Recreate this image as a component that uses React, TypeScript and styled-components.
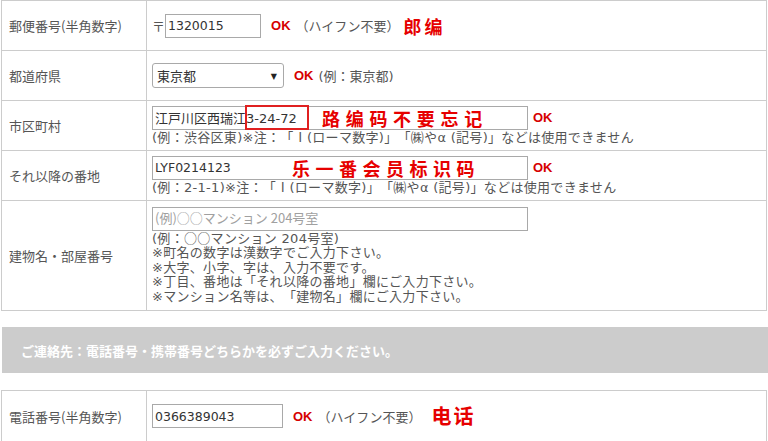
import React from 'react';
import styled, { createGlobalStyle } from 'styled-components';

const GlobalStyle = createGlobalStyle`
  html, body { margin: 0; padding: 0; background: #ffffff; }
  body {
    font-family: "DejaVu Sans", "Noto Sans CJK JP", sans-serif;
    font-size: 13px;
    color: #555555;
    text-spacing-trim: space-all;
  }
`;

const Page = styled.div`
  width: 768px;
  padding-left: 1px;
  box-sizing: border-box;
`;

const Table = styled.div<{ $mt?: number }>`
  width: 766px;
  border: 1px solid #cccccc;
  border-bottom: none;
  box-sizing: border-box;
  margin-top: ${(p) => p.$mt ?? 0}px;
`;

const Row = styled.div<{ $h: number }>`
  display: grid;
  grid-template-columns: 145px 1fr;
  height: ${(p) => p.$h}px;
  border-bottom: 1px solid #cccccc;
  box-sizing: border-box;
`;

const Label = styled.div`
  display: flex;
  align-items: center;
  padding-left: 7px;
  border-right: 1px solid #cccccc;
  white-space: nowrap;
  line-height: 1;
  font-family: "Noto Sans CJK JP", sans-serif;
`;

const Value = styled.div`
  display: flex;
  flex-direction: column;
  justify-content: center;
  padding-left: 5px;
  min-width: 0;
`;

const Line = styled.div`
  display: flex;
  align-items: center;
  white-space: nowrap;
`;

const Field = styled.div`
  position: relative;
  display: flex;
`;

const TextInput = styled.input<{ $w: number }>`
  width: ${(p) => p.$w}px;
  height: 24px;
  box-sizing: border-box;
  border: 1px solid #a9a9a9;
  border-radius: 0;
  padding: 0 2px;
  margin: 0;
  font-family: "DejaVu Sans", "Noto Sans CJK JP", sans-serif;
  font-size: 12.5px;
  color: #333333;
  background: #ffffff;
  outline: none;
  &::placeholder {
    color: #a0a0a0;
    font-family: "Noto Sans CJK JP", sans-serif;
    font-size: 13px;
  }
`;

const KanjiInput = styled(TextInput)`
  font-size: 13px;
`;

const SelectBox = styled.div`
  position: relative;
  width: 132px;
  height: 25px;
  box-sizing: border-box;
  border: 1px solid #a9a9a9;
  border-radius: 3px;
  display: flex;
  align-items: center;
  padding-left: 4px;
  color: #333333;
  background: #ffffff;
  font-family: "Noto Sans CJK JP", sans-serif;
`;

const Arrow = styled.span`
  position: absolute;
  right: 6px;
  top: 50%;
  transform: translateY(-50%);
  font-size: 8px;
  color: #222222;
  font-family: "DejaVu Sans", sans-serif;
`;

const Postal = styled.span`
  color: #555555;
  font-family: "Noto Sans CJK JP", sans-serif;
`;

const Ok = styled.span<{ $ml?: number }>`
  color: #d60000;
  font-weight: bold;
  font-family: "Liberation Sans", Arial, sans-serif;
  font-size: 13px;
  margin-left: ${(p) => p.$ml ?? 10}px;
  margin-right: 5px;
`;

const Note = styled.span`
  color: #555555;
`;

const Hint = styled.div`
  white-space: nowrap;
  line-height: 14.5px;
  letter-spacing: 0.3px;
  color: #555555;
`;

const Wide = styled.span`
  font-family: "Noto Sans CJK JP", sans-serif;
`;

const Scribble = styled.span<{ $size: number; $ls: number }>`
  color: #e60000;
  font-family: "Noto Sans CJK SC", sans-serif;
  font-weight: 700;
  font-size: ${(p) => p.$size}px;
  letter-spacing: ${(p) => p.$ls}px;
  line-height: 1;
  white-space: nowrap;
`;

const Overlay = styled.div<{ $left: number; $top: number }>`
  position: absolute;
  left: ${(p) => p.$left}px;
  top: ${(p) => p.$top}px;
  pointer-events: none;
`;

const RedBox = styled.div<{ $left: number; $w: number }>`
  position: absolute;
  left: ${(p) => p.$left}px;
  top: -1px;
  width: ${(p) => p.$w}px;
  height: 25px;
  border: 2px solid #e02020;
  box-sizing: border-box;
  pointer-events: none;
`;

const Band = styled.div`
  margin-top: 16px;
  margin-left: 1px;
  width: 766px;
  height: 46px;
  background: #cccccc;
  color: #ffffff;
  font-weight: bold;
  font-family: "Noto Sans CJK JP", sans-serif;
  display: flex;
  align-items: center;
  padding-left: 19px;
  box-sizing: border-box;
  white-space: nowrap;
`;

const RomanNote = () => (
  <>
    ※注：「<Wide>Ⅰ</Wide>(ローマ数字)」「㈱やα (記号)」などは使用できません
  </>
);

export default function App() {
  return (
    <Page>
      <GlobalStyle />
      <Table>
        <Row $h={50}>
          <Label>郵便番号(半角数字)</Label>
          <Value>
            <Line>
              <Postal>〒</Postal>
              <TextInput $w={96} defaultValue="1320015" />
              <Ok>OK</Ok>
              <Note>（ハイフン不要）</Note>
              <Scribble $size={18} $ls={3} style={{ marginLeft: 4 }}>郎编</Scribble>
            </Line>
          </Value>
        </Row>
        <Row $h={50}>
          <Label>都道府県</Label>
          <Value>
            <Line>
              <SelectBox>
                東京都
                <Arrow>▼</Arrow>
              </SelectBox>
              <Ok>OK</Ok>
              <Note>(例：東京都)</Note>
            </Line>
          </Value>
        </Row>
        <Row $h={50}>
          <Label>市区町村</Label>
          <Value>
            <Line>
              <Field>
                <KanjiInput $w={376} defaultValue="江戸川区西瑞江3-24-72" />
                <RedBox $left={93} $w={64} />
                <Overlay $left={170} $top={3}>
                  <Scribble $size={18} $ls={5.7}>路编码不要忘记</Scribble>
                </Overlay>
              </Field>
              <Ok $ml={5}>OK</Ok>
            </Line>
            <Hint>(例：渋谷区東)<RomanNote /></Hint>
          </Value>
        </Row>
        <Row $h={50}>
          <Label>それ以降の番地</Label>
          <Value>
            <Line>
              <Field>
                <TextInput $w={376} defaultValue="LYF0214123" />
                <Overlay $left={140} $top={3}>
                  <Scribble $size={18} $ls={5.5}>乐一番会员标识码</Scribble>
                </Overlay>
              </Field>
              <Ok $ml={5}>OK</Ok>
            </Line>
            <Hint>(例：2-1-1)<RomanNote /></Hint>
          </Value>
        </Row>
        <Row $h={110}>
          <Label>建物名・部屋番号</Label>
          <Value>
            <Line>
              <TextInput $w={376} placeholder="(例)○○マンション 204号室" />
            </Line>
            <Hint>(例：<Wide>○○</Wide>マンション 204号室)</Hint>
            <Hint>※町名の数字は漢数字でご入力下さい。</Hint>
            <Hint>※大字、小字、字は、入力不要です。</Hint>
            <Hint>※丁目、番地は「それ以降の番地」欄にご入力下さい。</Hint>
            <Hint>※マンション名等は、「建物名」欄にご入力下さい。</Hint>
          </Value>
        </Row>
      </Table>
      <Band>ご連絡先：電話番号・携帯番号どちらかを必ずご入力ください。</Band>
      <Table $mt={17}>
        <Row $h={51}>
          <Label>電話番号(半角数字)</Label>
          <Value>
            <Line>
              <TextInput $w={131} defaultValue="0366389043" />
              <Ok>OK</Ok>
              <Note>（ハイフン不要）</Note>
              <Scribble $size={20} $ls={2} style={{ marginLeft: 10 }}>电话</Scribble>
            </Line>
          </Value>
        </Row>
      </Table>
    </Page>
  );
}
